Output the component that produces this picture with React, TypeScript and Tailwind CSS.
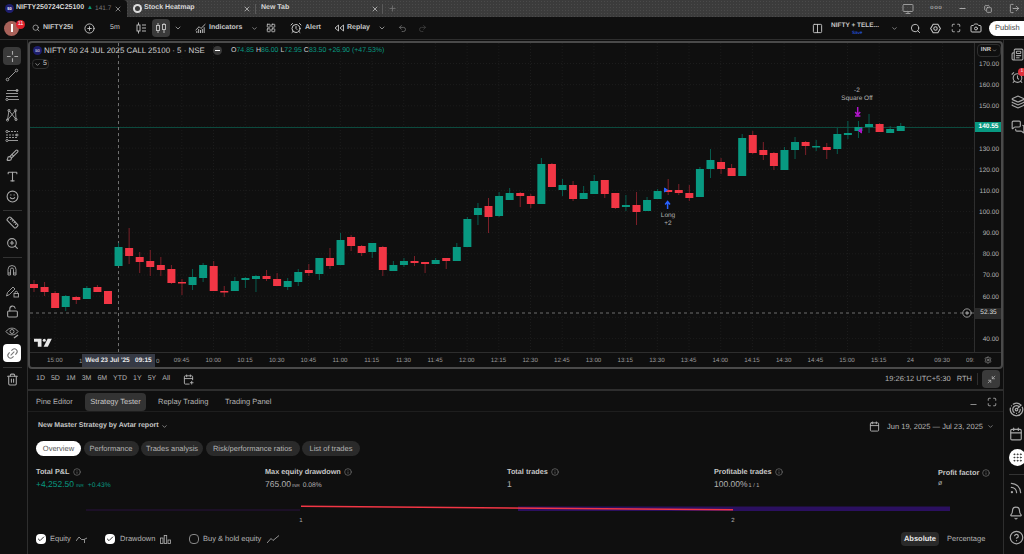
import type { ReactNode } from "react";
import {
  AlarmClock,
  Bell,
  Brush,
  Calendar,
  CalendarPlus,
  Camera,
  ChartNoAxesCombined,
  Check,
  ChevronDown,
  CircleHelp,
  CirclePlus,
  Columns2,
  Copy,
  Grip,
  Info,
  Layers,
  LayoutGrid,
  Link2,
  LockOpen,
  LogOut,
  Maximize,
  MessagesSquare,
  Minimize2,
  Minus,
  Monitor,
  Newspaper,
  Plus,
  Radar,
  Redo2,
  Rss,
  Ruler,
  Search,
  Settings,
  Smile,
  Trash2,
  Type,
  Undo2,
  X,
  ZoomIn,
} from "lucide-react";

// [wick top, body top, body bottom, wick bottom, 1 = green] in page pixels
const candles: number[][] = [
  [280, 284, 288, 292, 0],
  [282, 287, 292, 296, 0],
  [291, 293, 308, 308, 0],
  [295, 296, 307, 311, 1],
  [296, 297, 300, 304, 0],
  [286, 288, 299, 299, 1],
  [285, 287, 292, 292, 0],
  [291, 291, 304, 304, 0],
  [243, 247, 266, 266, 1],
  [228, 248, 256, 264, 0],
  [252, 257, 262, 273, 0],
  [250, 261, 267, 276, 0],
  [257, 265, 270, 276, 0],
  [265, 269, 283, 284, 0],
  [279, 282, 283, 295, 0],
  [269, 277, 285, 290, 1],
  [263, 265, 278, 282, 1],
  [261, 266, 291, 291, 0],
  [286, 291, 292, 297, 0],
  [277, 281, 291, 291, 1],
  [277, 278, 280, 288, 1],
  [275, 276, 279, 292, 1],
  [270, 276, 279, 281, 0],
  [273, 279, 286, 286, 0],
  [278, 281, 287, 290, 1],
  [269, 272, 282, 286, 1],
  [264, 270, 273, 276, 0],
  [258, 258, 274, 280, 1],
  [248, 258, 266, 269, 0],
  [233, 240, 265, 265, 1],
  [235, 237, 246, 251, 0],
  [245, 246, 253, 256, 0],
  [243, 243, 252, 258, 1],
  [246, 247, 270, 276, 0],
  [261, 265, 271, 271, 1],
  [258, 261, 265, 267, 1],
  [256, 261, 263, 266, 0],
  [262, 262, 264, 273, 0],
  [258, 260, 264, 264, 1],
  [258, 258, 261, 269, 0],
  [243, 247, 261, 261, 1],
  [217, 219, 247, 247, 1],
  [203, 208, 215, 225, 1],
  [198, 206, 217, 233, 0],
  [192, 196, 216, 217, 1],
  [188, 193, 200, 200, 1],
  [192, 193, 196, 207, 0],
  [194, 196, 204, 208, 0],
  [158, 164, 204, 204, 1],
  [163, 164, 187, 187, 0],
  [179, 185, 190, 196, 1],
  [181, 185, 199, 201, 0],
  [186, 193, 199, 199, 1],
  [175, 181, 194, 194, 1],
  [180, 180, 194, 198, 0],
  [193, 193, 208, 209, 0],
  [195, 205, 207, 211, 1],
  [192, 205, 212, 225, 0],
  [197, 200, 211, 211, 1],
  [189, 191, 199, 199, 1],
  [179, 190, 192, 195, 0],
  [184, 190, 193, 195, 0],
  [185, 193, 198, 201, 0],
  [167, 169, 197, 197, 1],
  [149, 160, 169, 178, 1],
  [158, 162, 169, 174, 0],
  [164, 168, 176, 176, 0],
  [134, 138, 176, 176, 1],
  [131, 135, 153, 154, 0],
  [142, 150, 155, 160, 0],
  [152, 153, 166, 170, 0],
  [147, 150, 170, 170, 1],
  [137, 142, 150, 159, 1],
  [141, 142, 146, 155, 0],
  [140, 146, 147, 151, 1],
  [143, 147, 150, 159, 0],
  [128, 134, 149, 154, 1],
  [121, 133, 135, 139, 1],
  [121, 127, 131, 138, 1],
  [114, 124, 127, 133, 1],
  [123, 124, 132, 132, 0],
  [126, 129, 133, 133, 1],
  [123, 126, 131, 131, 1],
];

const GREEN = "#089981";
const RED = "#f23645";
const candleX = (i: number) => 4 + i * 10.57;
const vGrid = Array.from({ length: 30 }, (_, k) => 25 + k * 31.7);
const hGrid = Array.from({ length: 15 }, (_, k) => 20.5 + k * 21.15);

function Chart() {
  // svg pixels = page pixels minus the plot's origin (30, 43)
  return (
    <svg className="absolute inset-0 w-full h-full" viewBox="0 0 944 309">
      {hGrid.map((y) => (
        <line key={y} x1="0" x2="944" y1={y} y2={y} stroke="#1c1c1c" strokeDasharray="1 2" />
      ))}
      {vGrid.map((x) => (
        <line key={x} x1={x} x2={x} y1="0" y2="309" stroke="#1c1c1c" strokeDasharray="1 2" />
      ))}
      <line x1="0" x2="944" y1="84.5" y2="84.5" stroke="#0c4a3e" />
      <line x1="0" x2="944" y1="270" y2="270" stroke="#6f6f6f" strokeDasharray="3 3" />
      <line x1="88.5" x2="88.5" y1="0" y2="309" stroke="#6f6f6f" strokeDasharray="3 3" />
      {candles.map((c, i) => {
        const x = candleX(i);
        const color = c[4] ? GREEN : RED;
        const wick = c[4] ? "#075e50" : "#7d2029";
        return (
          <g key={i}>
            <line x1={x} x2={x} y1={c[0] - 43} y2={c[3] - 43} stroke={wick} />
            <rect x={x - 4} y={c[1] - 43} width="8" height={Math.max(c[2] - c[1], 1.5)} fill={color} />
          </g>
        );
      })}
      {/* trade marks */}
      <path d="M637.6 166 v-7 M635.2 161.5 l2.4 -3 l2.4 3" stroke="#2962ff" strokeWidth="1.5" fill="none" />
      <path d="M634.5 149 l3 -2 l-3 -2 z" fill="#2962ff" stroke="#2962ff" />
      <path d="M827.7 64 v8 M825.2 69 l2.5 3 l2.5 -3 M825 73 h5.4" stroke="#b014c9" strokeWidth="1.5" fill="none" />
      <path d="M831.5 90 l-3 -2.3 l3 -2.3 z" fill="#b014c9" stroke="#b014c9" />
      {/* TradingView logo mark */}
      <path d="M4 295.7 H11.5 V303.7 H7.8 V298.7 H4 Z" fill="#e8e8e8" />
      <circle cx="14.3" cy="297.2" r="1.5" fill="#e8e8e8" />
      <path d="M21.8 295.7 L17.8 303.7 H13.6 L17.6 295.7 Z" fill="#e8e8e8" />
    </svg>
  );
}

const yLabels = ["170.00", "160.00", "150.00", "", "130.00", "120.00", "110.00", "100.00", "90.00", "80.00", "70.00", "60.00", "", "40.00"];
const xLabels = [
  "15:00", "", "", "", "09:45", "10:00", "10:15", "10:30", "10:45", "11:00", "11:15", "11:30", "11:45", "12:00", "12:15",
  "12:30", "12:45", "13:00", "13:15", "13:30", "13:45", "14:00", "14:15", "14:30", "14:45", "15:00", "15:15", "24", "09:30",
];

function Sep({ className = "h-4" }: { className?: string }) {
  return <div className={`w-px shrink-0 bg-[#2e2e2e] ${className}`} />;
}

function TabBar() {
  return (
    <div className="h-[17px] flex items-center bg-[#3b3b3b] text-[7px] font-bold text-[#d8d8d8] shrink-0 bg-[radial-gradient(#4a4a4a_0.5px,transparent_0.5px)] bg-[length:3px_3px]">
      <div className="w-[127px] h-full bg-[#0f0f0f] flex items-center pl-[5px] pr-[5px] rounded-tr-sm">
        <div className="w-[9px] h-[9px] rounded-full bg-[#1e1e6e] text-[4px] text-white flex items-center justify-center mr-[2px] shrink-0">50</div>
        <span className="whitespace-nowrap">NIFTY250724C25100</span>
        <span className="text-[6px] text-[#089981] ml-[3px]">▲</span>
        <span className="text-[6.5px] font-normal text-[#777] ml-[2px] whitespace-nowrap">141.7</span>
        <X className="ml-auto text-[#bbb] shrink-0" size={8} />
      </div>
      <div className="w-[128px] flex items-center pl-[6px] pr-[4px]">
        <div className="w-[9px] h-[9px] rounded-full bg-[#ddd] mr-[2px] flex items-center justify-center shrink-0">
          <div className="w-[5px] h-[5px] rounded-sm bg-[#3b3b3b]" />
        </div>
        <span className="whitespace-nowrap">Stock Heatmap</span>
        <X className="ml-auto" size={8} />
      </div>
      <Sep className="h-[10px] bg-[#5a5a5a]" />
      <div className="w-[126px] flex items-center pl-[5px] pr-[3px]">
        <span>New Tab</span>
        <X className="ml-auto" size={8} />
      </div>
      <Sep className="h-[10px] bg-[#5a5a5a]" />
      <Plus className="ml-[5px] text-[#777]" size={9} />
      <div className="ml-auto flex items-center text-[#9a9a9a] mr-[4px]">
        <Monitor size={12} />
        <div className="ml-[16px] w-[11px] text-[6px] tracking-[0.5px]">ooo</div>
        <Minus className="ml-[17px] text-[#ccc]" size={9} />
        <Copy className="ml-[17px] text-[#ccc]" size={8} />
        <LogOut className="ml-[17px] text-[#aaa]" size={11} />
      </div>
    </div>
  );
}

function BarsIcon() {
  return (
    <svg width="10" height="12" viewBox="0 0 10 12" fill="none" stroke="currentColor" strokeWidth="0.9">
      <path d="M2.5 0.5v11" />
      <rect x="1" y="3" width="3" height="6" fill="#0f0f0f" />
      <path d="M6 3h4M6 6h4M6 9h4" />
    </svg>
  );
}

function CandlesIcon() {
  return (
    <svg width="12" height="12" viewBox="0 0 12 12" fill="none" stroke="currentColor" strokeWidth="0.9">
      <path d="M3 1v10M9 1v10" />
      <rect x="1.5" y="3.5" width="3" height="5" fill="#3a3a3a" />
      <rect x="7.5" y="2.5" width="3" height="5" fill="#3a3a3a" />
    </svg>
  );
}

function ReplayIcon() {
  return (
    <svg width="10" height="10" viewBox="0 0 10 10" fill="none" stroke="currentColor" strokeWidth="0.9">
      <path d="M4.5 2 L1 5 L4.5 8 Z M9.5 2 L6 5 L9.5 8 Z" />
    </svg>
  );
}

function SettingsHex() {
  return (
    <svg width="11" height="11" viewBox="0 0 14 14" fill="none" stroke="currentColor" strokeWidth="1.3">
      <path d="M4 1.5h6L13.2 7 10 12.5H4L0.8 7Z" />
      <circle cx="7" cy="7" r="2.2" />
    </svg>
  );
}

function ToolBar() {
  return (
    <div className="h-[23px] flex items-center bg-[#0f0f0f] text-[7px] font-bold text-[#c8c8c8] shrink-0 border-b border-[#2e2e2e]">
      <div className="relative w-[15px] h-[15px] ml-[4px] rounded-full bg-[#a8625a] flex items-center justify-center shrink-0">
        <div className="w-[2px] h-[8px] bg-white" />
        <div className="absolute -top-[1px] left-[12px] w-[9px] h-[9px] rounded-full bg-[#e0202c] text-[5.5px] font-normal text-white flex items-center justify-center">11</div>
      </div>
      <Search className="ml-[13px] shrink-0" size={8} />
      <span className="ml-[3px] w-[31px] overflow-hidden whitespace-nowrap">NIFTY25I</span>
      <CirclePlus className="ml-[10px]" size={11} />
      <Sep className="ml-[7px]" />
      <span className="ml-[7px] w-[10px] font-normal">5m</span>
      <Sep className="ml-[9px]" />
      <div className="ml-[6px]"><BarsIcon /></div>
      <div className="ml-[6px] w-[18px] h-[18px] rounded-sm bg-[#3a3a3a] flex items-center justify-center">
        <CandlesIcon />
      </div>
      <ChevronDown className="ml-[4px]" size={8} />
      <Sep className="ml-[4px]" />
      <ChartNoAxesCombined className="ml-[8px]" size={11} />
      <span className="ml-[3px] w-[33px]">Indicators</span>
      <ChevronDown className="ml-[9px]" size={7} />
      <LayoutGrid className="ml-[8px]" size={10} />
      <Sep className="ml-[7px]" />
      <AlarmClock className="ml-[6px]" size={12} />
      <span className="ml-[3px] w-[17px]">Alert</span>
      <div className="ml-[12px]"><ReplayIcon /></div>
      <span className="ml-[3px] w-[22px]">Replay</span>
      <ChevronDown className="ml-[9px]" size={8} />
      <Sep className="ml-[4px]" />
      <Undo2 className="ml-[7px] text-[#777]" size={9} />
      <Redo2 className="ml-[11px] text-[#444]" size={9} />
      <Columns2 className="ml-auto" size={11} />
      <div className="ml-[8px] w-[49px] flex flex-col leading-[8px]">
        <span className="whitespace-nowrap text-[6.5px]">NIFTY + TELE...</span>
        <span className="ml-[21px] text-[4.5px] leading-[5px] font-normal text-[#2962ff]">Save</span>
      </div>
      <ChevronDown className="ml-[11px]" size={7} />
      <Sep className="ml-[5px]" />
      <Search className="ml-[6px]" size={11} />
      <div className="ml-[9px]"><SettingsHex /></div>
      <Maximize className="ml-[10px]" size={10} />
      <Camera className="ml-[9px]" size={12} />
      <div className="ml-[7px] w-[35px] h-[15px] rounded-l-full bg-white text-[#444] text-[7.5px] font-normal flex items-center pl-[6px] shrink-0">Publish</div>
    </div>
  );
}

function Glyph({ children }: { children: ReactNode }) {
  return (
    <svg width="14" height="14" viewBox="0 0 14 14" fill="none" stroke="currentColor" strokeWidth="0.9">
      {children}
    </svg>
  );
}

const leftTop = [
  <Glyph key="line">
    <path d="M3.5 10.5 L10.5 3.5" />
    <circle cx="2.5" cy="11.5" r="1.3" />
    <circle cx="11.5" cy="2.5" r="1.3" />
  </Glyph>,
  <Glyph key="fib">
    <path d="M2 2.5h11M1 5.5h12M1 8.5h12M3 11.5h11" />
    <circle cx="2" cy="11.5" r="1.1" />
    <circle cx="12" cy="2.5" r="1.1" />
  </Glyph>,
  <Glyph key="pattern">
    <path d="M2.5 12 L4 2.5 L11 11.5 L10.5 2.5 L2.5 12" />
    <circle cx="4" cy="2.5" r="1.1" />
    <circle cx="10.5" cy="2.5" r="1.1" />
    <circle cx="2.5" cy="12" r="1.1" />
    <circle cx="11" cy="11.5" r="1.1" />
  </Glyph>,
  <Glyph key="fork">
    <path d="M3 2.5h10M1 6h12M1 8.5h12" strokeDasharray="2 1" />
    <path d="M3 11.5h10" />
    <circle cx="2" cy="2.5" r="1.1" />
    <circle cx="2" cy="11.5" r="1.1" />
    <circle cx="12" cy="6" r="1" />
  </Glyph>,
  <Brush key="brush" size={13} />,
  <Type key="text" size={13} />,
  <Smile key="smile" size={13} />,
];

function LeftBar() {
  return (
    <div className="w-[28px] shrink-0 bg-[#0f0f0f] text-[#a8a8a8] pt-[7px] border-r border-[#2e2e2e]">
      <div className="w-[18px] ml-[3px] flex flex-col items-center">
        <div className="w-[18px] h-[18px] rounded-sm bg-[#3a3a3a] flex items-center justify-center">
          <svg width="13" height="13" viewBox="0 0 14 14" fill="none" stroke="currentColor" strokeWidth="1.2">
            <path d="M7 1v4M7 9v4M1 7h4M9 7h4" />
          </svg>
        </div>
        <div className="flex flex-col items-center gap-[7px] mt-[3px]">
          {leftTop.map((icon) => (
            <div key={icon.key} className="h-[13.3px] flex items-center">
              {icon}
            </div>
          ))}
        </div>
        <div className="w-[19px] h-px bg-[#333] mt-[7px] shrink-0" />
        <div className="flex flex-col items-center gap-[8px] mt-[5px]">
          <Ruler size={13} />
          <ZoomIn size={13} />
        </div>
        <div className="w-[19px] h-px bg-[#333] mt-[7px] shrink-0" />
        <div className="flex flex-col items-center gap-[7px] mt-[5px]">
          <Glyph>
            <path d="M3 12 V6.5 a4 4 0 0 1 8 0 V12 H8.5 V6.5 a1.5 1.5 0 0 0 -3 0 V12 Z M3 10 H5.5 M8.5 10 H11" />
          </Glyph>
          <Glyph>
            <path d="M1.5 12 L2.5 8.5 L8 3 L10 5 L4.5 10.5 Z" />
            <rect x="9" y="9.5" width="4.5" height="3.5" />
            <path d="M10 9.5 V8.5 a1.2 1.2 0 0 1 2.5 0 V9.5" />
          </Glyph>
          <LockOpen size={13} />
          <Glyph>
            <path d="M1 6.5 C4 2 10 2 13 6.5 C10 11 4 11 1 6.5 Z" />
            <circle cx="7" cy="6.5" r="2" />
            <path d="M9 13 L13 10" strokeWidth="1.4" />
          </Glyph>
        </div>
        <div className="w-[18px] h-[18px] rounded-sm bg-white text-[#777] flex items-center justify-center mt-[5px] shrink-0">
          <Link2 className="-rotate-45" size={13} />
        </div>
        <div className="w-[19px] h-px bg-[#333] mt-[5px] shrink-0" />
        <Trash2 className="mt-[5px] shrink-0" size={13} />
      </div>
    </div>
  );
}

function RightBar() {
  return (
    <div className="w-[21px] flex flex-col items-start shrink-0 bg-[#0f0f0f] text-[#a8a8a8] pl-[7px] pt-[8px] overflow-hidden border-l border-[#2e2e2e]">
      <Newspaper className="shrink-0" size={13} />
      <div className="relative mt-[10px] shrink-0">
        <AlarmClock size={13} />
        <div className="absolute -top-[3px] left-[7px] w-[8px] h-[8px] rounded-full bg-[#e0303c] text-[5px] text-white flex items-center justify-center">1</div>
      </div>
      <Layers className="mt-[11px] shrink-0" size={14} />
      <MessagesSquare className="mt-[11px] shrink-0" size={14} />
      <Radar className="mt-[268px] -ml-[2px] shrink-0" size={15} />
      <Calendar className="mt-[10px] -ml-[2px] shrink-0" size={14} />
      <div className="mt-[8px] -ml-[2px] w-[17px] h-[17px] rounded-full bg-white text-[#333] flex items-center justify-center shrink-0">
        <Grip size={11} />
      </div>
      <div className="mt-[8px] -ml-[2px] w-[15px] h-px bg-[#333] shrink-0" />
      <Rss className="mt-[6px] -ml-[2px] shrink-0" size={14} />
      <Bell className="mt-[11px] -ml-[2px] shrink-0" size={14} />
      <CircleHelp className="mt-[10px] -ml-[2px] shrink-0" size={15} />
    </div>
  );
}

function ChartPane() {
  return (
    <div className="h-[328px] border-2 border-[#4a4a4a] rounded-sm flex flex-col shrink-0 bg-[#0f0f0f] overflow-hidden">
      <div className="flex flex-1 min-h-0">
        {/* plot */}
        <div className="relative flex-1 overflow-hidden">
          <Chart />
          <div className="absolute top-[2px] left-[3px] flex items-center text-[#d0d0d0] whitespace-nowrap">
            <div className="w-[9px] h-[9px] rounded-full bg-[#1e1e6e] text-[4px] text-white flex items-center justify-center mr-[2px]">50</div>
            <span className="w-[161px] text-[7.9px]">NIFTY 50 24 JUL 2025 CALL 25100 · 5 · NSE</span>
            <div className="ml-[8px] w-[9px] h-[9px] rounded-full bg-[#3a3a3a] flex items-center justify-center">
              <div className="w-[5px] h-px bg-white" />
            </div>
            <div className="ml-[9px] text-[7px] text-[#089981]">
              <span className="text-[#ccc]">O</span>74.85 <span className="text-[#ccc]">H</span>86.00 <span className="text-[#ccc]">L</span>72.95 <span className="text-[#ccc]">C</span>83.50 +26.90 (+47.53%)
            </div>
          </div>
          <div className="absolute top-[16px] left-[2px] w-[17px] h-[10px] border border-[#2e2e2e] rounded-sm text-[#ccc] text-[7px] flex items-center justify-center gap-[2px]">
            <ChevronDown size={7} />
            5
          </div>
          <div className="absolute top-[43.5px] left-[807px] w-[40px] text-center text-[6.5px] leading-[8px] text-[#b4b4b4] whitespace-nowrap">
            -2
            <br />
            Square Off
          </div>
          <div className="absolute top-[168.5px] left-[618px] w-[40px] text-center text-[6.5px] leading-[8px] text-[#b4b4b4]">
            Long
            <br />
            +2
          </div>
          <CirclePlus className="absolute left-[932px] top-[265px] text-[#b4b4b4]" size={10} />
        </div>
        {/* price axis */}
        <div className="relative w-[27px] shrink-0 border-l border-[#2e2e2e] text-[6.5px] text-[#b4b4b4]">
          <div className="absolute top-[1px] left-[2px] w-[24px] h-[13px] border border-[#2e2e2e] rounded-sm text-[6px] font-bold text-[#c8c8c8] flex items-center justify-center gap-[1px]">
            INR
            <ChevronDown size={5} />
          </div>
          <div className="flex flex-col items-end pr-[2px] pt-[11px]">
            {yLabels.map((l, i) => (
              <div key={i} className="h-[21.15px] leading-[21.15px]">
                {l}
              </div>
            ))}
          </div>
          <div className="absolute top-[79px] left-0 w-[27px] h-[10px] bg-[#089981] text-white text-[6.5px] font-bold flex items-center justify-center">140.55</div>
          <div className="absolute top-[264.5px] left-0 w-[27px] h-[11px] bg-[#2a2a2a] text-[#ddd] text-[6.5px] flex items-center justify-center">52.35</div>
        </div>
      </div>
      {/* time axis */}
      <div className="relative h-[15px] shrink-0 border-t border-[#2e2e2e] text-[6.2px] text-[#9a9a9a]">
        <div className="flex h-full items-center pt-[2px] ml-[9px]">
          {xLabels.map((t, i) => (
            <div key={i} className="text-center shrink-0 w-[31.7px]">
              {t}
            </div>
          ))}
          <div className="w-[17px] overflow-hidden whitespace-nowrap ml-[8px]">09:</div>
        </div>
        <span className="absolute top-[4px] left-[49px]">1</span>
        <span className="absolute top-[4px] left-[126px]">0</span>
        <div className="absolute top-[1px] left-[52px] w-[73px] h-[13px] bg-[#363a45] text-[#e8e8e8] text-[6.5px] font-bold flex items-center justify-center whitespace-pre">Wed 23 Jul '25   09:15</div>
        <Settings className="absolute top-[3px] right-[9px]" size={8} />
      </div>
    </div>
  );
}

function RangeBar() {
  return (
    <div className="h-[22px] flex items-center shrink-0 text-[7px] text-[#b4b4b4] pl-[8px] pr-[3px] border-b-2 border-[#2e2e2e]">
      <div className="flex gap-[6px]">
        {["1D", "5D", "1M", "3M", "6M", "YTD", "1Y", "5Y", "All"].map((r) => (
          <span key={r}>{r}</span>
        ))}
      </div>
      <Sep className="ml-[5px]" />
      <CalendarPlus className="ml-[7px]" size={11} />
      <div className="ml-auto flex items-center text-[7.5px]">
        <span className="whitespace-nowrap">19:26:12 UTC+5:30</span>
        <span className="ml-[6px]">RTH</span>
        <Sep className="ml-[5px] h-[12px]" />
        <div className="ml-[4px] w-[18px] h-[18px] rounded-sm bg-[#3a3a3a] flex items-center justify-center">
          <Minimize2 size={9} />
        </div>
      </div>
    </div>
  );
}

function BottomTabs() {
  return (
    <div className="h-[21px] flex items-center shrink-0 text-[7.5px] text-[#b4b4b4] pl-[8px] pt-[1px] border-b border-[#1e1e1e]">
      <span className="w-[37px] whitespace-nowrap">Pine Editor</span>
      <div className="ml-[12px] w-[61px] h-[18px] rounded-sm bg-[#333] text-[#c8c8c8] flex items-center justify-center whitespace-nowrap">Strategy Tester</div>
      <span className="ml-[12px] w-[49px] whitespace-nowrap">Replay Trading</span>
      <span className="ml-[18px] whitespace-nowrap">Trading Panel</span>
      <Minus className="ml-auto mt-[6px]" size={9} />
      <Maximize className="ml-[9px] mr-[6px]" size={10} />
    </div>
  );
}

function Metric({ title, className, children }: { title: string; className: string; children: ReactNode }) {
  return (
    <div className={`shrink-0 ${className}`}>
      <div className="flex items-center text-[7.3px] font-bold text-[#c8c8c8] h-[10px] whitespace-nowrap">
        {title}
        <Info className="ml-[3px] text-[#777]" size={8} />
      </div>
      <div className="mt-[1px] text-[8.5px] text-[#b4b4b4] h-[12px] flex items-baseline whitespace-nowrap">{children}</div>
    </div>
  );
}

function Report() {
  return (
    <div className="flex-1 flex flex-col pl-[8px] pr-[9px] text-[#b4b4b4]">
      <div className="flex items-center h-[13px] mt-[8px] text-[7px] font-bold text-[#c8c8c8] pl-[2px]">
        <span className="whitespace-nowrap">New Master Strategy by Avtar report</span>
        <ChevronDown className="ml-[3px]" size={7} />
        <div className="ml-auto flex items-center font-normal text-[7.5px] text-[#b4b4b4]">
          <Calendar size={11} />
          <span className="ml-[7px] whitespace-nowrap">Jun 19, 2025 — Jul 23, 2025</span>
          <ChevronDown className="ml-[4px]" size={7} />
        </div>
      </div>
      <div className="flex items-center gap-[2.5px] mt-[8px] text-[7.5px] whitespace-nowrap">
        <div className="w-[45px] h-[15px] rounded-full bg-white text-[#555] flex items-center justify-center">Overview</div>
        <div className="w-[55px] h-[15px] rounded-full bg-[#2a2a2a] flex items-center justify-center">Performance</div>
        <div className="w-[62px] h-[15px] rounded-full bg-[#2a2a2a] flex items-center justify-center">Trades analysis</div>
        <div className="w-[94px] h-[15px] rounded-full bg-[#2a2a2a] flex items-center justify-center">Risk/performance ratios</div>
        <div className="w-[58px] h-[15px] rounded-full bg-[#2a2a2a] flex items-center justify-center">List of trades</div>
      </div>
      <div className="flex mt-[11px] items-start">
        <Metric title="Total P&L" className="w-[229px]">
          <span className="text-[#089981]">+4,252.50</span>
          <span className="ml-[2px] text-[4.5px] text-[#089981]">INR</span>
          <span className="ml-[4px] text-[6.7px] text-[#089981]">+0.43%</span>
        </Metric>
        <Metric title="Max equity drawdown" className="w-[242px]">
          765.00
          <span className="ml-[1px] text-[4.5px]">INR</span>
          <span className="ml-[3px] text-[6.7px]">0.08%</span>
        </Metric>
        <Metric title="Total trades" className="w-[207px]">
          1
        </Metric>
        <Metric title="Profitable trades" className="w-[224px]">
          100.00%
          <span className="ml-[1px] text-[5.5px]">1 / 1</span>
        </Metric>
        <Metric title="Profit factor" className="mt-[1px]">
          <span className="text-[7px]">ø</span>
        </Metric>
      </div>
      {/* equity strip */}
      <div className="relative h-[24px] mt-[12px] shrink-0">
        <svg className="absolute inset-0 w-full h-full" viewBox="0 0 958 24">
          <line x1="50" x2="264" y1="7" y2="7" stroke="#2a1240" />
          <rect x="482" y="3.5" width="432" height="4.5" fill="#2b1060" />
          <path d="M265 2.5 L697 6 V7.5 L265 4 Z" fill="#f23645" />
          <text x="265" y="19" fontSize="6" fill="#aaa" textAnchor="middle">1</text>
          <text x="697" y="19" fontSize="6" fill="#aaa" textAnchor="middle">2</text>
        </svg>
      </div>
      <div className="flex items-center text-[7.5px] h-[14px] mt-[5px] whitespace-nowrap">
        <div className="w-[10px] h-[10px] rounded-sm bg-white text-[#333] flex items-center justify-center shrink-0">
          <Check size={8} strokeWidth={3} />
        </div>
        <span className="ml-[4px] w-[21px]">Equity</span>
        <svg className="ml-[5px]" width="11" height="9" viewBox="0 0 11 9" fill="none" stroke="currentColor" strokeWidth="0.8">
          <path d="M0 6 L3 2 L5.5 4.5 H8 L11 3 M8.5 4.5 L8.5 8" />
        </svg>
        <div className="ml-[18px] w-[10px] h-[10px] rounded-sm bg-white text-[#333] flex items-center justify-center shrink-0">
          <Check size={8} strokeWidth={3} />
        </div>
        <span className="ml-[5px] w-[35px]">Drawdown</span>
        <svg className="ml-[5px]" width="11" height="9" viewBox="0 0 11 9" fill="none" stroke="currentColor" strokeWidth="0.8">
          <rect x="0.5" y="3" width="2.5" height="5.5" />
          <rect x="4.2" y="0.5" width="2.5" height="8" />
          <rect x="8" y="5" width="2.5" height="3.5" />
        </svg>
        <div className="ml-[18px] w-[10px] h-[10px] rounded-sm border border-[#888] shrink-0" />
        <span className="ml-[4px] w-[60px]">Buy & hold equity</span>
        <svg className="ml-[4px]" width="12" height="9" viewBox="0 0 12 9" fill="none" stroke="currentColor" strokeWidth="0.8">
          <path d="M0 8 L4 3.5 L6 5.5 L12 0.5" />
        </svg>
        <div className="ml-auto w-[38px] h-[14px] rounded-sm bg-[#2a2a2a] text-[#e8e8e8] font-bold flex items-center justify-center">Absolute</div>
        <span className="ml-[8px] mr-[9px] w-[38px]">Percentage</span>
      </div>
    </div>
  );
}

export default function App() {
  return (
    <div className="w-[1024px] h-[554px] overflow-hidden flex flex-col bg-[#0f0f0f] font-['Liberation_Sans',sans-serif] [text-rendering:geometricPrecision]">
      <TabBar />
      <ToolBar />
      <div className="flex flex-1 min-h-0">
        <LeftBar />
        <div className="flex-1 min-w-0 flex flex-col pt-[1px]">
          <ChartPane />
          <RangeBar />
          <BottomTabs />
          <Report />
        </div>
        <RightBar />
      </div>
    </div>
  );
}
